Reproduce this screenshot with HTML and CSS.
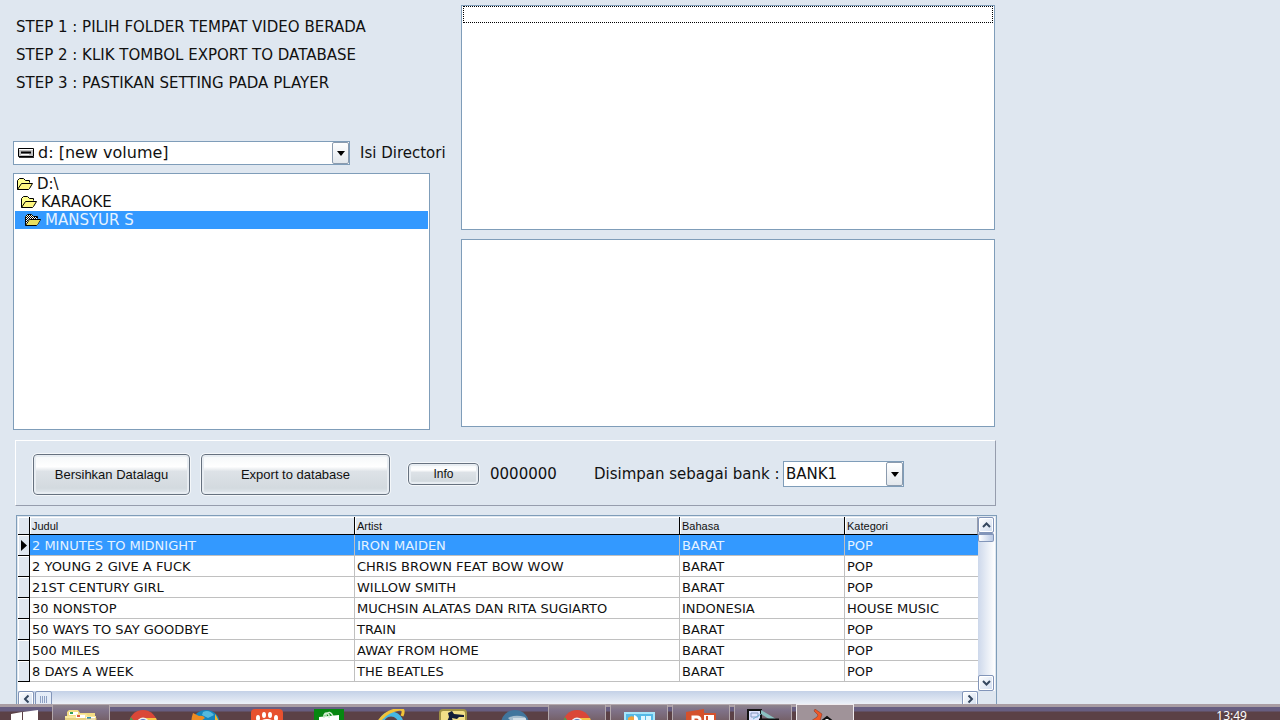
FILE: index.html
```html
<!DOCTYPE html>
<html lang="id">
<head>
<meta charset="utf-8">
<title>Export to database</title>
<link rel="stylesheet" href="styles.css">
</head>
<body>
<svg class="defs" width="0" height="0" aria-hidden="true">
  <symbol id="folder" viewBox="0 0 16 12"><path d="M.5 11.500V2.500L2.500.500H6.500L8.500 2.500H12.500V4.500" fill="#ffff8c" stroke="#000"/><path d="M.5 11.500L4.500 5.500H15.500L12.500 10.500L11.500 11.500Z" fill="#fff780" stroke="#000"/></symbol>
  <pattern id="dots" width="2" height="2" patternUnits="userSpaceOnUse"><path d="M0 0h1v1H0zM1 1h1v1H1z" fill="#000"/></pattern>
  <symbol id="chrome" viewBox="0 0 28 28"><circle cx="14" cy="14" r="14" fill="#da4738"/><path d="M2 7L9 17L14 28A14 14 0 0 1 2 7" fill="#4b9d50"/><path d="M14 8H27A14 14 0 0 1 14 28L20 16Z" fill="#f5c344"/><circle cx="14" cy="14" r="6.500" fill="#eee"/><circle cx="14" cy="14" r="5" fill="#5578c4"/></symbol>
  <symbol id="up" viewBox="0 0 9 6"><path d="M1 5L4.500 1.500L8 5" fill="none" stroke="#35475f" stroke-width="2"/></symbol>
</svg>
<main class="form">
  <div class="browse">
    <section class="source">
      <ol class="steps">
        <li>STEP 1 : PILIH FOLDER TEMPAT VIDEO BERADA</li>
        <li>STEP 2 : KLIK TOMBOL EXPORT TO DATABASE</li>
        <li>STEP 3 : PASTIKAN SETTING PADA PLAYER</li>
      </ol>
      <div class="drive-row">
        <div class="combo drive">
          <svg class="drive-icon" width="16" height="10" viewBox="0 0 16 10"><path d="M.5.5h15v8H.5z" fill="#c0c0c0" stroke="#000"/><path d="M1 1.500H15" stroke="#fff"/><path d="M3 4.500H13" stroke="#000" stroke-width="2"/><path d="M3 6.500H11" stroke="#fff"/><path d="M1 9.500H16" stroke="#333"/></svg>
          <select id="drive"><option>d: [new volume]</option></select>
          <span class="drop" aria-hidden="true"></span>
        </div>
        <label for="drive">Isi Directori</label>
      </div>
      <ul class="box folders" role="listbox" aria-label="Folder">
        <li role="option"><svg width="16" height="12"><use href="#folder"/></svg>D:\</li>
        <li role="option" class="level1"><svg width="16" height="12"><use href="#folder"/></svg>KARAOKE</li>
        <li role="option" class="level2 selected" aria-selected="true"><svg width="16" height="12" viewBox="0 0 16 12"><use href="#folder"/><path d="M1 10V3L3 1H6L8 3H12V5H4Z" fill="#fff"/><path d="M1 10V3L3 1H6L8 3H12V5H4Z" fill="url(#dots)"/><path d="M2 11L5 6H15L12 11Z" fill="#e8df60"/></svg>MANSYUR S</li>
      </ul>
    </section>
    <section class="files">
      <div class="box file-list" role="listbox" aria-label="File video" tabindex="0"><div class="focus-item"></div></div>
      <div class="box queue" role="listbox" aria-label="Daftar" tabindex="0"></div>
    </section>
  </div>

  <section class="panel">
    <button class="clear">Bersihkan Datalagu</button>
    <button class="export">Export to database</button>
    <button class="info">Info</button>
    <output class="count">0000000</output>
    <label for="bank">Disimpan sebagai bank :</label>
    <div class="combo bank">
      <select id="bank"><option>BANK1</option></select>
      <span class="drop" aria-hidden="true"></span>
    </div>
  </section>

  <section class="data">
    <div class="table-area">
      <table>
        <colgroup><col class="c-mark"><col class="c-title"><col class="c-artist"><col class="c-lang"><col class="c-cat"></colgroup>
        <thead><tr><th></th><th>Judul</th><th>Artist</th><th>Bahasa</th><th>Kategori</th></tr></thead>
        <tbody>
          <tr class="selected"><th><svg width="6" height="11" viewBox="0 0 6 11"><path d="M0 0L6 5.500L0 11Z"/></svg></th><td>2 MINUTES TO MIDNIGHT</td><td>IRON MAIDEN</td><td>BARAT</td><td>POP</td></tr>
          <tr><th></th><td>2 YOUNG 2 GIVE A FUCK</td><td>CHRIS BROWN FEAT BOW WOW</td><td>BARAT</td><td>POP</td></tr>
          <tr><th></th><td>21ST CENTURY GIRL</td><td>WILLOW SMITH</td><td>BARAT</td><td>POP</td></tr>
          <tr><th></th><td>30 NONSTOP</td><td>MUCHSIN ALATAS DAN RITA SUGIARTO</td><td>INDONESIA</td><td>HOUSE MUSIC</td></tr>
          <tr><th></th><td>50 WAYS TO SAY GOODBYE</td><td>TRAIN</td><td>BARAT</td><td>POP</td></tr>
          <tr><th></th><td>500 MILES</td><td>AWAY FROM HOME</td><td>BARAT</td><td>POP</td></tr>
          <tr><th></th><td>8 DAYS A WEEK</td><td>THE BEATLES</td><td>BARAT</td><td>POP</td></tr>
        </tbody>
      </table>
    </div>
    <div class="vscroll">
      <button class="sb" aria-label="Gulir ke atas"><svg width="9" height="6"><use href="#up"/></svg></button>
      <span class="vthumb"></span>
      <button class="sb end" aria-label="Gulir ke bawah"><svg class="down" width="9" height="6"><use href="#up"/></svg></button>
    </div>
    <div class="hscroll">
      <button class="sb" aria-label="Gulir ke kiri"><svg class="left" width="9" height="6"><use href="#up"/></svg></button>
      <span class="hthumb"></span>
      <button class="sb end" aria-label="Gulir ke kanan"><svg class="right" width="9" height="6"><use href="#up"/></svg></button>
    </div>
  </section>
</main>

<nav class="taskbar" aria-label="Taskbar">
  <button class="start" aria-label="Start"><svg width="27" height="26" viewBox="0 0 27 26"><path d="M0 4L11 2V13H0zM12 2L27 0V13H12z" fill="#fff"/></svg></button>
  <button class="task open" aria-label="File Explorer"><svg width="32" height="28" viewBox="0 0 32 28"><path d="M2 2L4 0H13L15 3H30V28H2Z" fill="#f3dc83"/><path d="M4 2h9v3H4z" fill="#fff"/><path d="M5 2h3v2H5z" fill="#31a05b"/><path d="M0 6H10L12 4H21L23 6H31V28H0Z" fill="#f8e8a0"/><path d="M11 5h9v3h-9z" fill="#fff"/><path d="M12 5h3v2h-3z" fill="#d85b42"/><path d="M21 7h9v3h-9z" fill="#fff"/><path d="M22 7h4v2h-4z" fill="#2e91ba"/><path d="M0 9H32" stroke="#d6b95d"/></svg></button>
  <button class="task" aria-label="Chrome"><svg width="28" height="28"><use href="#chrome"/></svg></button>
  <button class="task" aria-label="Firefox"><svg width="28" height="28" viewBox="0 0 28 28"><circle cx="15" cy="14" r="14" fill="#1685bd"/><path d="M12 2Q18-1 23 5L17 8L11 5Z" fill="#55b9dd"/><path d="M2 3L8 6Q12 5 14 8L10 11Q12 15 18 14V28H7Q-3 18 2 3" fill="#ee8b22"/><path d="M24 4Q29 11 28 18L24 14Z" fill="#f5b829"/></svg></button>
  <button class="task" aria-label="GOM Player"><svg class="high" width="32" height="32" viewBox="0 0 32 32"><rect width="32" height="32" rx="4" fill="#e7512f"/><g fill="#fff"><ellipse cx="7" cy="9" rx="2" ry="3"/><ellipse cx="13" cy="6" rx="2" ry="3"/><ellipse cx="19" cy="6" rx="2" ry="3"/><ellipse cx="25" cy="9" rx="2" ry="3"/><ellipse cx="16" cy="16" rx="9" ry="6"/></g></svg></button>
  <button class="task" aria-label="Store"><svg class="high" width="30" height="30" viewBox="0 0 30 30"><path d="M0 0h30v30H0z" fill="#078711"/><path d="M5 8L25 6V26H5Z" fill="#fff"/><path d="M10 9V6Q12 2 15 6V9M12 8V5Q16 1 19 7" fill="none" stroke="#d4efd2" stroke-width="1.500"/></svg></button>
  <button class="task" aria-label="Internet Explorer"><svg class="high" width="28" height="28" viewBox="0 0 28 28"><circle cx="14" cy="15" r="10" fill="none" stroke="#46b7e3" stroke-width="5"/><path d="M8 14H20" stroke="#47b5df" stroke-width="4"/><path d="M1 14Q8 2 23 0Q28 0 25 7" fill="none" stroke="#f2c338" stroke-width="3"/></svg></button>
  <button class="task" aria-label="Counter-Strike"><svg class="high" width="28" height="28" viewBox="0 0 28 28"><rect x="1" y="1" width="26" height="27" rx="3" fill="#f2df87" stroke="#a09245" stroke-width="2"/><path d="M9 4L13 2L15 5L25 6V8H20L18 10L13 9L15 16L7 15L10 8Z" fill="#141e38"/></svg></button>
  <button class="task" aria-label="Browser"><svg width="28" height="28" viewBox="0 0 28 28"><circle cx="14" cy="14" r="14" fill="#40759d"/><path d="M7 8Q14 4 24 7L27 13H12Z" fill="#a6bdce"/><path d="M12 9H25" stroke="#fff"/></svg></button>
  <button class="task open" aria-label="Chrome"><svg width="28" height="28"><use href="#chrome"/></svg></button>
  <button class="task open" aria-label="Control Panel"><svg class="low" width="31" height="26" viewBox="0 0 31 26"><path d="M1 1h29v24H1z" fill="#55b9e6" stroke="#a7e5fa" stroke-width="2"/><path d="M4 6Q7 3 10 5V9H4Z" fill="#f1a23b"/><path d="M10 3A5 5 0 0 1 14 9H10Z" fill="#fff"/><path d="M17 4h4v5h-4zM22 4h5v5h-5z" fill="#dff7ff"/></svg></button>
  <button class="task open" aria-label="PowerPoint"><svg class="high" width="30" height="30" viewBox="0 0 30 30"><path d="M15 5h14v20H15z" fill="#fff" stroke="#d4522d" stroke-width="2"/><path d="M21 7V12H26" fill="none" stroke="#d4522d" stroke-width="2"/><path d="M0 3L18 0V30L0 27Z" fill="#d4512c"/><path d="M7 18V8H11Q14 8 14 11T11 14H7" fill="none" stroke="#fff" stroke-width="3"/></svg></button>
  <button class="task open" aria-label="Komputer"><svg class="high" width="32" height="30" viewBox="0 0 32 30"><path d="M1 1h13v15H1z" fill="#dfe3ff" stroke="#111" stroke-width="2"/><path d="M4 4H11V8H4Z" fill="none" stroke="#8799c2"/><path d="M14 1L29 10H22L14 5Z" fill="#8bc0c0"/><path d="M13 10.500H31V16H12Z" fill="#f5f5f5" stroke="#111" stroke-width="2"/><path d="M6 10L14 5" stroke="#73b3d4"/></svg></button>
  <button class="task open active" aria-label="Karaoke"><svg class="high" width="28" height="30" viewBox="0 0 28 30"><path d="M4 0L11 5L9 12H0L6 8L7 6L3 2Z" fill="#ef5827" stroke="#7e3020" stroke-width=".5"/><path d="M11 12L16 8L26 16L20 20H12L15 14Z" fill="#f4f4f4" stroke="#111" stroke-width="2"/></svg></button>
  <div class="tray">
    <svg width="112" height="10" viewBox="0 0 112 10"><path d="M0 9L6 7L14 5V9ZM24 5h2V9h-2zM27 5h1V9h-1zM30 6Q34 4 36 6V9H30ZM48 5h2V9h-2zM51 6h5V9h-5z" fill="#fff"/><path d="M72.500 4.500h13v7h-13z" fill="#777" stroke="#111"/><path d="M107 6h3v3h-3z" fill="#222"/></svg>
    <time>13:49</time>
  </div>
</nav>
</body>
</html>
```
FILE: styles.css
```css
* { box-sizing: border-box; }
body {
  margin: 0;
  height: 100vh;
  overflow: hidden;
  background: #dfe7f0;
  color: #111;
  font: 15px/18px "DejaVu Sans", sans-serif;
}
.defs { position: absolute; }
button, select { font: inherit; color: inherit; }
svg { display: block; flex: none; }
ol, ul { margin: 0; padding: 0; list-style: none; }

.form { max-width: 997px; padding: 5px 0 0 13px; }
.box { background: #fff; border: 1px solid #7f9db9; }

.browse {
  display: grid;
  grid-template-columns: 448fr 536fr;
  height: 425px;
}
.source { display: flex; flex-direction: column; }
.steps { padding: 8px 0 0 3px; line-height: 28px; }
.drive-row {
  display: flex;
  align-items: center;
  gap: 10px;
  margin-top: 44px;
}
.drive-row label { white-space: nowrap; }
.combo { position: relative; }
.combo select {
  appearance: none;
  display: block;
  width: 100%;
  height: 100%;
  padding: 0 20px 0 2px;
  background: #fff;
  border: 1px solid #7f9db9;
  border-radius: 0;
}
.combo .drop {
  position: absolute;
  top: 1px;
  right: 1px;
  bottom: 1px;
  width: 17px;
  border: 1px solid #8b9bae;
  border-radius: 2px;
  background: linear-gradient(#fff, #e3e8ed);
  pointer-events: none;
}
.combo .drop::after {
  content: "";
  position: absolute;
  left: 4px;
  top: 50%;
  margin-top: -2px;
  border: 4px solid transparent;
  border-top: 5px solid #000;
  border-bottom: 0;
}
.drive { width: 337px; height: 24px; flex: none; }
.drive select { padding-left: 24px; font-size: 16px; }
.drive-icon { position: absolute; left: 5px; top: 7px; }
.folders {
  flex: 1;
  margin: 8px 31px 0 0;
  padding: 1px;
}
.folders li { display: flex; align-items: center; gap: 4px; height: 18px; padding-left: 2px; }
.folders .level1 { padding-left: 6px; }
.folders .level2 { padding-left: 10px; }
.selected { background: #3399ff; color: #e6f3ff; }
.files {
  display: grid;
  grid-template-rows: 225fr 188fr;
  gap: 9px;
  padding: 0 2px 3px 0;
}
.file-list { padding: 0 1px; }
.focus-item { height: 17px; border: 1px dotted #000; }

.panel {
  display: flex;
  align-items: center;
  height: 66px;
  margin: 10px 1px 0 2px;
  padding: 2px 0 0 17px;
  border: 1px solid #969dad;
  border-top-color: #fff;
  border-left-color: #fff;
}
.panel button {
  padding: 0;
  border: 1px solid #66717f;
  border-radius: 4px;
  outline: 1px solid #f4f7fa;
  background: linear-gradient(#f4f7f9, #fff 30%, #dde2e7 42%, #d3dadf 85%, #e4eaf0);
  box-shadow: inset 0 0 0 2px #e8edf2;
  font: 13px "Liberation Sans", sans-serif;
  height: 41px;
}
.panel .clear { width: 157px; }
.panel .export { width: 189px; margin-left: 11px; }
.panel .info { width: 71px; height: 22px; margin-left: 18px; font-size: 12px; }
.count { width: 104px; margin-left: 11px; }
.panel label { width: 189px; white-space: nowrap; }
.bank { width: 121px; height: 26px; }

.data {
  display: grid;
  grid-template-columns: 1fr 17px;
  grid-template-rows: 174px 16px;
  margin: 9px 0 0 3px;
  border: 1px solid #7f9db9;
  padding: 1px;
}
.table-area { background: #fff; overflow: hidden; }
table { width: 100%; border-collapse: separate; border-spacing: 0; table-layout: fixed; }
.c-mark { width: 12px; }
.c-title, .c-artist { width: 325px; }
.c-lang { width: 165px; }
th, td { padding: 0 0 0 2px; white-space: nowrap; text-align: left; font-weight: normal; }
th {
  background: #dfe7f0;
  border-right: 1px solid #000;
  border-bottom: 1px solid #000;
  box-shadow: inset 1px 1px #fff;
}
thead th { height: 18px; font: 11px/16px "Liberation Sans", sans-serif; }
thead th:last-child { border-right-color: #969dad; }
tbody th, td { height: 21px; }
tbody th { padding-left: 3px; }
td {
  padding-top: 2px;
  border-right: 1px solid #c0c0c0;
  border-bottom: 1px solid #c0c0c0;
  font-size: 13px;
  line-height: 18px;
}
td:last-child { border-right: 0; }

.vscroll { display: flex; flex-direction: column; padding-right: 1px; background: linear-gradient(90deg, #cdd8eb, #fff); }
.hscroll { display: flex; background: linear-gradient(#c4d1e7, #f4f7fb); }
.sb {
  display: grid;
  place-items: center;
  width: 16px;
  height: 16px;
  padding: 0;
  border: 1px solid #8295b9;
  border-radius: 2px;
  background: linear-gradient(135deg, #fff, #d0dcef);
  box-shadow: inset 0 0 0 1px #fff;
}
.vscroll .end { margin-top: auto; }
.hscroll .end { margin-left: auto; }
.down { transform: rotate(180deg); }
.left { transform: rotate(-90deg); }
.right { transform: rotate(90deg); }
.vthumb { height: 9px; border: 1px solid #8295b9; border-top-width: 2px; border-radius: 2px; background: linear-gradient(90deg, #fff, #b9c9e5); }
.hthumb {
  width: 17px;
  margin-left: 1px;
  border: 1px solid #8295b9;
  border-radius: 2px;
  background: repeating-linear-gradient(90deg, #8da0c3 0 1px, transparent 1px 2px) center / 8px 7px no-repeat, #e4ecf8;
}

.taskbar {
  position: fixed;
  left: 0;
  right: 0;
  bottom: 0;
  display: flex;
  gap: 4px;
  height: 16px;
  overflow: hidden;
  background: linear-gradient(#a99da3 0 3px, #675e81 3px 7px, #5b4146 8px 16px);
}
.taskbar button { display: flex; justify-content: center; padding: 6px 0 0; border: 0; background: none; height: 40px; flex: none; }
.taskbar .start { width: 48px; }
.taskbar .task { width: 58px; }
.taskbar .open { padding-top: 5px; border: 1px solid #b4a9ad; background: linear-gradient(#8f858c, #80738a 5px, #75616a 15px); }
.taskbar .active { border-color: #f0ecee; background: #a09399; }
.taskbar .low { margin-top: 2px; }
.taskbar .high { margin-top: -1px; }
.tray { display: flex; align-items: flex-start; gap: 71px; margin-left: auto; padding: 6px 33px 0 0; color: #fff; }
.tray svg { margin-top: 6px; }
.tray time { font: 12px/12px "Noto Sans", sans-serif; }
```
